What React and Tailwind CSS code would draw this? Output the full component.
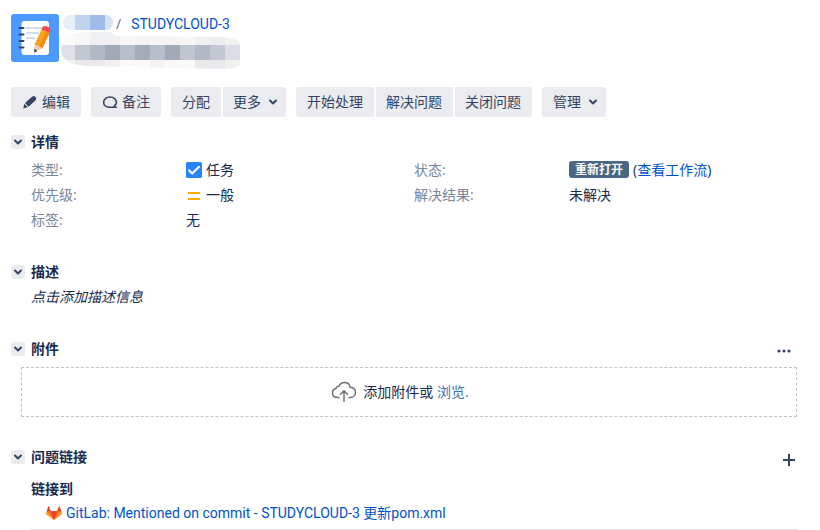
import React, { useState } from "react";

const NAME_CELLS = [
  { x: 60, c: "#e9eff9" },
  { x: 75, c: "#c3d3ee" },
  { x: 90, c: "#a0bce9" },
  { x: 105, c: "#d6e2f1" },
];

const TITLE_ROWS = [
  { y: 30, cells: ["#fafafa", "#f7f7f8", "#f0f1f3", "#f0f1f3", "#f6f7f8", "#f3f4f5", "#f4f5f6", "#f3f4f5", "#f7f7f8", "#f0f1f3", "#ecedf0", "#f0f1f3"] },
  { y: 45, cells: ["#dee1e6", "#c3c7d0", "#b3b9c5", "#a3a9b8", "#b9becb", "#a4abba", "#b9becb", "#a3a9b8", "#c0c5cf", "#b3b9c6", "#c4c8d1", "#dadde3"] },
  { y: 60, cells: ["#f0f1f3", "#e6e8ec", "#e8eaee", "#eff1f4", "#f8fafb", "#f8fafb", "#f3f4f6", "#f8f9fa", "#f8fafb", "#e8eaee", "#e8e9ed", "#f0f1f3"] },
];

function ProjectAvatar() {
  return (
    <svg viewBox="0 0 48 48" className="size-12 shrink-0" role="img" aria-label="项目">
      <rect width="48" height="48" rx="3" fill="#4c9aff" />
      <rect x="10.500" y="7" width="27.500" height="34" rx="3" fill="#fff" />
      <path d="M15 14h16M15 19h13M15 24h9" stroke="#cfdeeb" strokeWidth="2" />
      <path d="M8.500 14h4M8.500 20.500h4M8.500 27h4M8.500 33.500h4" stroke="#344563" strokeWidth="2" strokeLinecap="round" />
      <path d="M30.500 15.500 38.500 19 31.500 34 23.500 30.500Z" fill="#faa21b" />
      <path d="M35 17.500 38.500 19 31.500 34 28 32.500Z" fill="#f28c13" />
      <path d="m30.500 15.500 1.200-2.500q1.500-1.800 5-.3 3.400 1.600 2.800 4L38.500 19Z" fill="#f9484a" />
      <path d="m23.500 30.500 8 3.500-7.500 4.500Z" fill="#f3cba0" />
      <path d="m23.300 34.600 3 2.300-3.100 1.800Z" fill="#344563" />
    </svg>
  );
}

function MaskedTitle() {
  return (
    <svg viewBox="0 0 180 56" className="absolute left-0 top-0 h-14 w-[180px]" aria-hidden="true">
      <defs>
        <clipPath id="name-mask">
          <rect x="2" y="1" width="50" height="15" rx="7" />
        </clipPath>
        <clipPath id="title-mask">
          <path d="M2 22 22 18H50L54 22 160 23Q178 24 179 31V50Q177 55 165 55L28 52Q10 51 7 47Q0 44 0 36Z" />
        </clipPath>
      </defs>
      <g clipPath="url(#title-mask)">
        {TITLE_ROWS.map((row) =>
          row.cells.map((c, i) => (
            <rect key={`${row.y}-${i}`} x={i * 15 - 1} y={row.y - 14} width="15" height="15" fill={c} />
          ))
        )}
      </g>
      <g clipPath="url(#name-mask)">
        {NAME_CELLS.map(({ x, c }) => (
          <rect key={x} x={x - 61} y="1" width="15" height="16" fill={c} />
        ))}
      </g>
    </svg>
  );
}

function PencilIcon() {
  return (
    <svg viewBox="0 0 16 16" className="size-4" fill="#344563" aria-hidden="true">
      <path d="M3 9 10.300 2.600q1.800-1.200 3.200.4 1.500 1.700.2 3.200L6.500 12.700Z" />
      <path d="M2.300 9.700 5.700 13.300 1.200 14.500Z" />
    </svg>
  );
}

function CommentIcon() {
  return (
    <svg viewBox="0 0 16 16" className="size-4" fill="none" stroke="#344563" strokeWidth="1.600" aria-hidden="true">
      <path d="M12.200 12.200C13.600 11.200 14.400 9.800 14.400 8.200 14.400 5.300 11.700 3 8 3S1.600 5.300 1.600 8.200 4.300 13.300 8 13.300H14.300C13 13.300 12.400 12.900 12.200 12.200Z" strokeLinejoin="round" />
    </svg>
  );
}

function Chevron() {
  return (
    <svg viewBox="0 0 16 16" className="size-4 shrink-0" fill="none" stroke="#344563" strokeWidth="2" strokeLinecap="round" strokeLinejoin="round" aria-hidden="true">
      <path d="M5 6.500 8 9.500 11 6.500" />
    </svg>
  );
}

function ToolButton({ icon, menu, position = "only", children }) {
  const shape = {
    only: "rounded-[3px] pl-[11px]",
    first: "rounded-l-[3px] pl-[11px]",
    middle: "pl-2.5",
    last: "rounded-r-[3px] pl-2.5",
  }[position];
  return (
    <button
      type="button"
      className={`flex h-[30px] items-center gap-1 bg-[#ebecf0] text-[#344563] hover:bg-[#dfe1e6] ${shape} ${menu ? "pr-[5px]" : "pr-[11px]"}`}
      aria-haspopup={menu ? "menu" : undefined}
    >
      {icon}
      <span>{children}</span>
      {menu && <Chevron />}
    </button>
  );
}

function Section({ title, action, className, children }) {
  const [open, setOpen] = useState(true);
  return (
    <section className={className}>
      <div className="flex h-5 items-center gap-1.5">
        <button
          type="button"
          aria-label={title}
          aria-expanded={open}
          onClick={() => setOpen(!open)}
          className="flex size-3.5 items-center justify-center rounded-[3px] bg-[#ebecf0]"
        >
          <Chevron />
        </button>
        <h2 className="grow font-bold">{title}</h2>
        {action}
      </div>
      {open && children}
    </section>
  );
}

function Field({ label, children }) {
  return (
    <div className="flex">
      <dt className="w-[155px] text-[#7a869a]">{label}:</dt>
      <dd className="flex items-center gap-1">{children}</dd>
    </div>
  );
}

export default function App() {
  return (
    <main className="bg-white pl-[11px] pr-[23px] pt-3.5 font-['Open_Sans','Noto_Sans_CJK_SC',sans-serif] text-sm text-[#172b4d]">
      <header className="flex gap-[2px]">
        <ProjectAvatar />
        <div className="relative grow">
          <MaskedTitle />
          <nav aria-label="导航" className="flex gap-2.5 pl-[55px] leading-5">
            <span className="text-[#5e6c84]">/</span>
            <a href="#issue" className="font-['Roboto','Noto_Sans_CJK_SC',sans-serif] text-[#0052cc]">STUDYCLOUD-3</a>
          </nav>
        </div>
      </header>

      <div className="mt-[25px] flex flex-wrap gap-2.5">
        <ToolButton icon={<PencilIcon />}>编辑</ToolButton>
        <ToolButton icon={<CommentIcon />}>备注</ToolButton>
        <div className="flex gap-0.5">
          <ToolButton position="first">分配</ToolButton>
          <ToolButton position="last" menu>更多</ToolButton>
        </div>
        <div className="flex gap-0.5">
          <ToolButton position="first">开始处理</ToolButton>
          <ToolButton position="middle">解决问题</ToolButton>
          <ToolButton position="last">关闭问题</ToolButton>
        </div>
        <ToolButton menu>管理</ToolButton>
      </div>

      <Section title="详情" className="mt-[15px]">
        <div className="mt-[5px] grid grid-cols-2 pl-5 leading-[25px]">
          <dl>
            <Field label="类型">
              <svg viewBox="0 0 16 16" className="size-4" aria-hidden="true">
                <rect width="16" height="16" rx="1.500" fill="#2684ff" />
                <path d="m3 8.300 3.200 3.200L13 4.700" fill="none" stroke="#fff" strokeWidth="2" strokeLinecap="round" />
              </svg>
              任务
            </Field>
            <Field label="优先级">
              <svg viewBox="0 0 16 16" className="size-4" aria-hidden="true">
                <path d="M2 6h12M2 12h12" stroke="#ffab00" strokeWidth="2" />
              </svg>
              一般
            </Field>
            <Field label="标签">无</Field>
          </dl>
          <dl>
            <Field label="状态">
              <span className="rounded-[3px] bg-[#4a6785] px-1.5 text-xs leading-[17px] font-bold text-white">重新打开</span>
              <span>
                (<a href="#workflow" className="text-[#0052cc]">查看工作流</a>)
              </span>
            </Field>
            <Field label="解决结果">未解决</Field>
          </dl>
        </div>
      </Section>

      <Section title="描述" className="mt-[30px]">
        <p className="mt-0.5 pl-5 leading-[25px] italic">点击添加描述信息</p>
      </Section>

      <Section
        title="附件"
        className="mt-[30px]"
        action={
          <button type="button" aria-label="附件选项" className="mr-1.5 pt-1">
            <svg viewBox="0 0 14 14" className="size-3.5" fill="#344563" aria-hidden="true">
              <circle cx="2" cy="7" r="1.600" />
              <circle cx="7" cy="7" r="1.600" />
              <circle cx="12" cy="7" r="1.600" />
            </svg>
          </button>
        }
      >
        <div className="ml-2.5 mt-2 flex h-[50px] items-center justify-center gap-1.5 border border-dashed border-[#c4c4c4] pr-[18px]">
          <svg viewBox="0 0 26 22" className="h-[22px] w-[26px]" fill="none" stroke="#707070" strokeWidth="1.500" strokeLinecap="round" strokeLinejoin="round" aria-hidden="true">
            <path d="M8 16.500H6.500C3.500 16.500 1.500 14.600 1.500 12 1.500 9.800 3 8 5 7.600 5.200 6 6.500 5 8 5.200 9 2.800 11 1.500 13.500 1.500c3 0 5.200 1.900 5.600 4.700 3.200.2 5.400 2.300 5.400 5.200 0 3-2.200 5.100-5.200 5.100H18" />
            <path d="M13 20.500V10M9.500 13.200 13 9.700l3.500 3.500" />
          </svg>
          <span>
            添加附件或 <a href="#browse" className="text-[#3b73af]">浏览.</a>
          </span>
        </div>
      </Section>

      <Section
        title="问题链接"
        className="mt-[30px]"
        action={
          <button type="button" aria-label="添加链接" className="mr-0.5 pt-1.5">
            <svg viewBox="0 0 12 12" className="size-3" stroke="#344563" strokeWidth="2" aria-hidden="true">
              <path d="M6 0v12M0 6h12" />
            </svg>
          </button>
        }
      >
        <div className="ml-5 mt-3">
          <h3 className="font-bold leading-5">链接到</h3>
          <ul className="mt-0.5 border-b border-[#dfdfdf] pb-[3px]">
            <li className="flex items-center gap-1 pl-[15px] leading-[25px]">
              <svg viewBox="0 0 16 16" className="size-4" aria-hidden="true">
                <path d="M8 14 0 8 .8 5.300 2.700 0 4.900 5.300H11.100L13.300 0l1.900 5.300L16 8Z" fill="#fc6d26" />
                <path d="M8 14 4.900 5.300H11.100Z" fill="#e24329" />
                <path d="M2.700 0 4.900 5.300H.8ZM13.300 0l1.900 5.300H11.100Z" fill="#e24329" />
                <path d="M.8 5.300 8 14 0 8ZM15.200 5.300 8 14l8-6Z" fill="#fca326" />
              </svg>
              <a href="#commit" className="font-['Roboto','Noto_Sans_CJK_SC',sans-serif] text-[#0052cc]">GitLab: Mentioned on commit - STUDYCLOUD-3 更新pom.xml</a>
            </li>
          </ul>
        </div>
      </Section>
    </main>
  );
}
